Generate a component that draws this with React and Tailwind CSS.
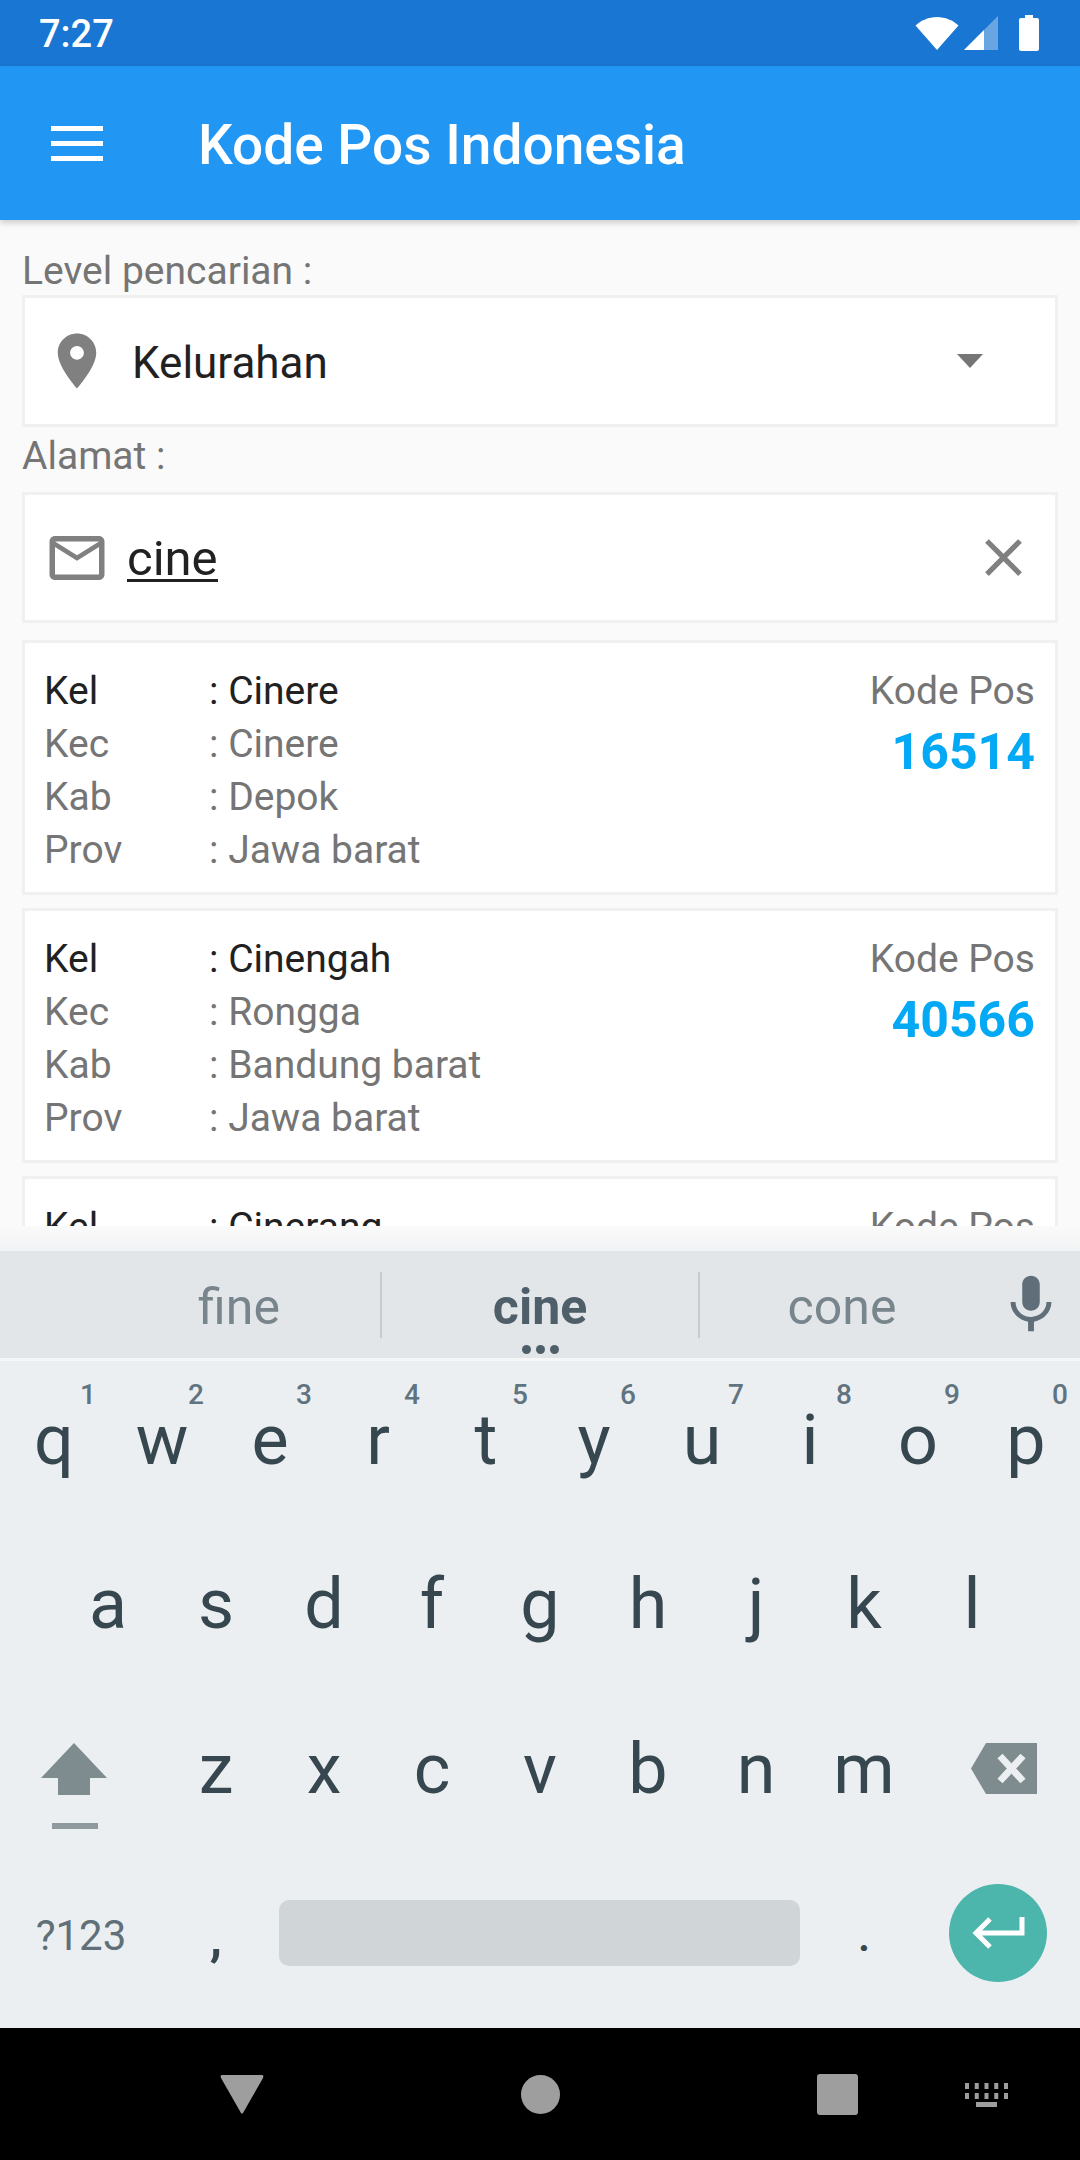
import React from 'react';

const results = [
    { kel: 'Cinere', kec: 'Cinere', kab: 'Depok', prov: 'Jawa barat', code: '16514' },
    { kel: 'Cinengah', kec: 'Rongga', kab: 'Bandung barat', prov: 'Jawa barat', code: '40566' },
    { kel: 'Cinerang', kec: 'Cinerang', kab: 'Bandung', prov: 'Jawa barat', code: '40000' },
];

function Row({ label, value, dark }) {
    return (
        <div className={`flex h-[53px] items-center ${dark ? 'text-[#212121]' : 'text-[#757575]'}`}>
            <span className="w-[165px]">{label}</span>
            <span>: {value}</span>
        </div>
    );
}

function ResultCard({ item }) {
    return (
        <div className="mb-[13px] flex h-[255px] shrink-0 justify-between border-[3px] border-[#f0f0f0] bg-white pt-[22px] pr-[20px] pl-[19px] text-[39px]">
            <div>
                <Row label="Kel" value={item.kel} dark />
                <Row label="Kec" value={item.kec} />
                <Row label="Kab" value={item.kab} />
                <Row label="Prov" value={item.prov} />
            </div>
            <div className="text-right">
                <div className="flex h-[53px] items-center justify-end text-[#757575]">Kode Pos</div>
                <div className="mt-[4px] text-[50px] leading-[60px] font-bold text-[#03a9f4]">{item.code}</div>
            </div>
        </div>
    );
}

function Key({ ch, hint }) {
    return (
        <div className="relative flex w-[108px] justify-center">
            <span className="text-[70px] leading-[82px]">{ch}</span>
            {hint && <span className="absolute top-[-20px] right-[12px] text-[28px] leading-[32px] font-medium text-[#5f7380]">{hint}</span>}
        </div>
    );
}

const row1 = [['q', '1'], ['w', '2'], ['e', '3'], ['r', '4'], ['t', '5'], ['y', '6'], ['u', '7'], ['i', '8'], ['o', '9'], ['p', '0']];

export default function App() {
    return (
        <div className="flex h-[2160px] w-[1080px] flex-col overflow-hidden bg-[#fafafa] font-['Roboto',sans-serif]">
            {/* status bar */}
            <div className="flex h-[66px] shrink-0 items-center justify-between bg-[#1976d2] pr-[41px] pl-[39px] text-white">
                <span className="pt-[2px] text-[38px] font-medium">7:27</span>
                <div className="flex items-center">
                    <svg width="44" height="33" viewBox="0 0 44 33" fill="white"><path d="M22 33 0.5 8.500C6 3.500 13.500 0 22 0s16 3.500 21.500 8.500z" /></svg>
                    <svg className="ml-[5px]" width="34" height="34" viewBox="0 0 34 34"><path d="M34 0v34H0z" fill="#ffffff" fillOpacity="0.35" /><path d="M20 14v20H0z" fill="white" /></svg>
                    <svg className="ml-[21px]" width="20" height="36" viewBox="0 0 20 36" fill="white"><path d="M6 0h8v3h4q2 0 2 2v29q0 2-2 2H2q-2 0-2-2V5q0-2 2-2h4z" /></svg>
                </div>
            </div>

            {/* app bar */}
            <div className="z-10 flex h-[154px] shrink-0 items-center bg-[#2196f3] pl-[51px] shadow-[0_3px_6px_rgba(0,0,0,0.18)]">
                <svg width="52" height="35" viewBox="0 0 52 35" fill="white">
                    <rect width="52" height="5" />
                    <rect y="15" width="52" height="5" />
                    <rect y="30" width="52" height="5" />
                </svg>
                <span className="ml-[95px] pt-[4px] text-[55px] font-medium text-white">Kode Pos Indonesia</span>
            </div>

            {/* search form */}
            <div className="flex h-[1006px] shrink-0 flex-col overflow-hidden px-[22px] pt-[26px]">
                <div className="h-[49px] text-[39px] leading-[51px] text-[#757575]">Level pencarian :</div>
                <div className="flex h-[132px] shrink-0 items-center border-[3px] border-[#f0f0f0] bg-white pr-[72px] pl-[19px]">
                    <svg width="66" height="66" viewBox="0 0 24 24" fill="#808080"><path d="M12 2C8.130 2 5 5.130 5 9c0 5.250 7 13 7 13s7-7.750 7-13c0-3.870-3.130-7-7-7zm0 9.500c-1.380 0-2.500-1.120-2.500-2.500s1.120-2.500 2.500-2.500 2.500 1.120 2.500 2.500-1.120 2.500-2.500 2.500z" /></svg>
                    <span className="ml-[22px] flex-1 pt-[4px] text-[44px] text-[#212121]">Kelurahan</span>
                    <svg width="26" height="14" viewBox="0 0 26 14" fill="#757575"><path d="M0 0h26L13 14z" /></svg>
                </div>
                <div className="mt-[5px] h-[60px] shrink-0 text-[39px] leading-[49px] text-[#757575]">Alamat :</div>
                <div className="flex h-[131px] shrink-0 items-center border-[3px] border-[#f0f0f0] bg-white pr-[20px] pl-[19px]">
                    <svg width="66" height="66" viewBox="0 0 24 24" fill="#808080"><path d="M20 4H4c-1.100 0-1.990.9-1.990 2L2 18c0 1.100.9 2 2 2h16c1.100 0 2-.9 2-2V6c0-1.100-.9-2-2-2zm0 14H4V8l8 5 8-5v10zm-8-7L4 6h16l-8 5z" /></svg>
                    <span className="ml-[17px] flex-1 pt-[6px] text-[49px] leading-[40px] text-[#212121]">
                        <span className="inline-block border-b-[3px] border-[#212121]">cine</span>
                    </span>
                    <svg width="63" height="63" viewBox="0 0 24 24" fill="#808080"><path d="M19 6.410 17.590 5 12 10.590 6.410 5 5 6.410 10.590 12 5 17.590 6.410 19 12 13.410 17.590 19 19 17.590 13.410 12z" /></svg>
                </div>
                <div className="mt-[17px] flex min-h-0 flex-col">
                    {results.map((item) => <ResultCard key={item.code} item={item} />)}
                </div>
            </div>

            <div className="h-[25px] shrink-0 bg-gradient-to-b from-[#fafafa] to-[#f2f3f4]" />

            {/* keyboard */}
            <div className="flex h-[110px] shrink-0 items-center border-b-[3px] border-[#f4f6f7] bg-[#e3e6e9] text-[50px] text-[#78858c]">
                <div className="flex w-[380px] justify-center pt-[6px] pl-[98px]"><span>fine</span></div>
                <div className="h-[66px] w-[2px] bg-[#c6cbce]" />
                <div className="relative flex w-[316px] justify-center pt-[6px] font-bold text-[#4f5f69]">
                    <span>cine</span>
                    <div className="absolute bottom-[-9px] flex gap-[5px]">
                        <i className="h-[9px] w-[9px] rounded-full bg-[#4f5f69]" />
                        <i className="h-[9px] w-[9px] rounded-full bg-[#4f5f69]" />
                        <i className="h-[9px] w-[9px] rounded-full bg-[#4f5f69]" />
                    </div>
                </div>
                <div className="h-[66px] w-[2px] bg-[#c6cbce]" />
                <div className="flex w-[284px] justify-center pt-[6px]"><span>cone</span></div>
                <svg className="ml-[12px]" width="70" height="70" viewBox="0 0 24 24" fill="#5f6e78"><path d="M12 14c1.660 0 3-1.340 3-3V5c0-1.660-1.340-3-3-3S9 3.340 9 5v6c0 1.660 1.340 3 3 3zm5.300-3c0 3-2.540 5.100-5.300 5.100S6.700 14 6.700 11H5c0 3.410 2.720 6.230 6 6.720V21h2v-3.280c3.280-.48 6-3.300 6-6.720h-1.700z" /></svg>
            </div>

            <div className="flex h-[667px] shrink-0 flex-col bg-[#eceff1] text-[#37474f]">
                <div className="flex pt-[38px]">
                    {row1.map(([ch, hint]) => <Key key={ch} ch={ch} hint={hint} />)}
                </div>
                <div className="flex pt-[82px] pl-[54px]">
                    {'asdfghjkl'.split('').map((ch) => <Key key={ch} ch={ch} />)}
                </div>
                <div className="mt-[83px] flex h-[82px] items-start">
                    <div className="flex w-[162px] flex-col items-start pt-[15px] pl-[41px]">
                        <svg width="66" height="52" viewBox="0 0 66 52" fill="#7f8c8f"><path d="M33 0 66 35H49V52H17V35H0z" /></svg>
                        <div className="mt-[28px] ml-[11px] h-[6px] w-[46px] bg-[#8f9a9e]" />
                    </div>
                    {'zxcvbnm'.split('').map((ch) => <Key key={ch} ch={ch} />)}
                    <svg className="mt-[15px] ml-[53px]" width="66" height="51" viewBox="0 0 66 51">
                        <path d="M15 0H66V51H15L0 25.500z" fill="#7f8c8f" />
                        <path d="M29 13 52 38M52 13 29 38" stroke="#eceff1" strokeWidth="7" />
                    </svg>
                </div>
                <div className="flex items-center pt-[74px]">
                    <span className="w-[162px] pt-[4px] text-center text-[42px] text-[#5f7079]">?123</span>
                    <span className="ml-[27px] w-[54px] pt-[10px] text-center text-[50px] font-bold">,</span>
                    <div className="ml-[36px] h-[66px] w-[521px] rounded-[10px] bg-[#d0d5d8]" />
                    <span className="ml-[37px] w-[54px] pt-[10px] text-center text-[40px] font-bold">.</span>
                    <div className="ml-[58px] flex h-[98px] w-[98px] items-center justify-center rounded-full bg-[#4db6ac]">
                        <svg width="54" height="32" viewBox="0 0 54 32" fill="none" stroke="white" strokeWidth="5"><path d="M51 0V16H5M19 2 5 16 19 30" /></svg>
                    </div>
                </div>
            </div>

            {/* nav bar */}
            <div className="flex h-[133px] shrink-0 items-center bg-black pl-[220px]">
                <svg width="44" height="39" viewBox="0 0 44 39" fill="#9e9e9e"><path d="M2 0h40q2 0 1 3L23 38q-1 1-2 0L1 3Q0 0 2 0z" /></svg>
                <div className="ml-[257px] h-[39px] w-[39px] rounded-full bg-[#9e9e9e]" />
                <div className="ml-[257px] h-[41px] w-[41px] rounded-[3px] bg-[#9e9e9e]" />
                <svg className="ml-[107px]" width="43" height="24" viewBox="0 0 43 24" fill="#9e9e9e">
                    <path d="M0 0h4v6H0zM9.750 0h4v6h-4zM19.500 0h4v6h-4zM29.250 0h4v6h-4zM39 0h4v6h-4zM0 10h4v6H0zM9.750 10h4v6h-4zM19.500 10h4v6h-4zM29.250 10h4v6h-4zM39 10h4v6h-4zM11 19h21v5H11z" />
                </svg>
            </div>
        </div>
    );
}
